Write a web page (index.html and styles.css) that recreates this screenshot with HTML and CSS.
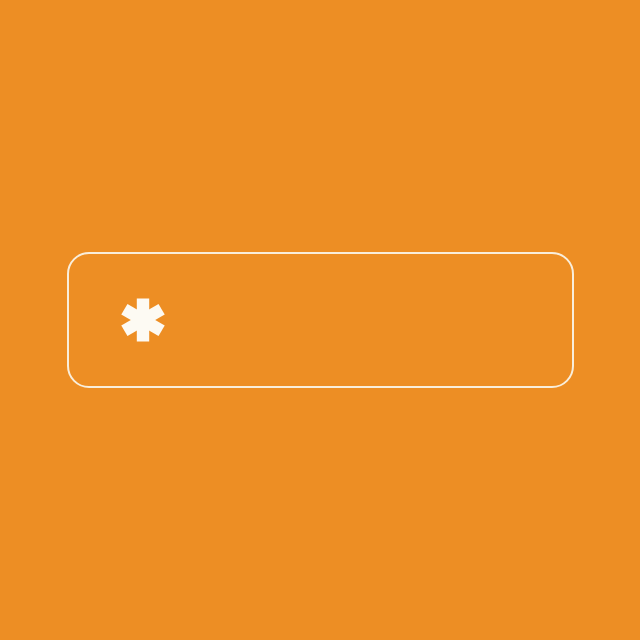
FILE: index.html
```html
<!DOCTYPE html>
<html>
<head>
<meta charset="utf-8">
<link rel="stylesheet" href="styles.css">
</head>
<body>
<div class="page">
  <div class="field">
    <svg class="star" width="46" height="46" viewBox="0 0 46 46" aria-hidden="true">
      <g fill="#FDFAF3">
        <rect x="16.8" y="1.5" width="12.4" height="43"/>
        <rect x="16.8" y="1.5" width="12.4" height="43" transform="rotate(60 23 23)"/>
        <rect x="16.8" y="1.5" width="12.4" height="43" transform="rotate(120 23 23)"/>
      </g>
    </svg>
  </div>
</div>
</body>
</html>
```

FILE: styles.css
```css
html, body {
  margin: 0;
  padding: 0;
  background: #ED8E24;
}
.page {
  width: 640px;
  height: 640px;
  display: flex;
  align-items: center;
  justify-content: center;
}
.field {
  box-sizing: border-box;
  width: 507px;
  height: 136px;
  border: 2px solid #F9EEDB;
  border-radius: 22px;
  display: flex;
  align-items: center;
  padding-left: 51px;
}
.star {
  display: block;
}
```
